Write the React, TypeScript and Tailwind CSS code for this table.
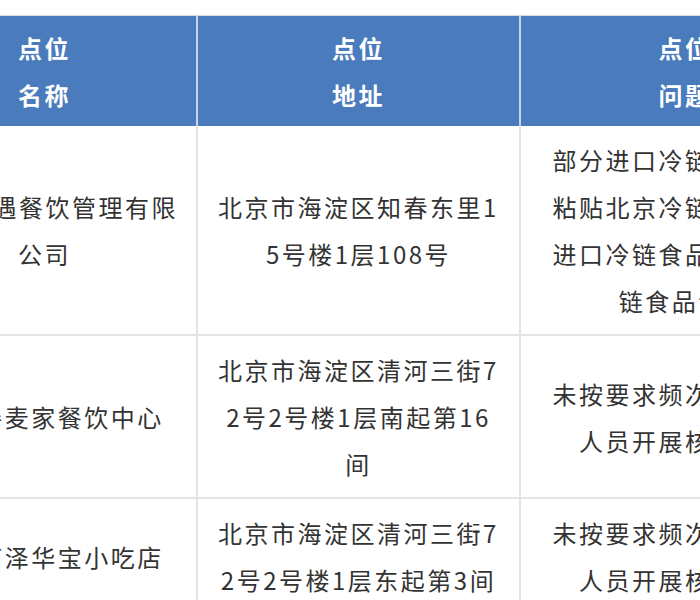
import React from "react";

type Row = {
  name: string[];
  address: string[];
  problem: string[];
};

const rows: Row[] = [
  {
    name: ["北京相遇餐饮管理有限", "公司"],
    address: ["北京市海淀区知春东里1", "5号楼1层108号"],
    problem: ["部分进口冷链食品未按", "粘贴北京冷链食品追溯", "进口冷链食品未索取冷", "链食品证明"],
  },
  {
    name: ["北京善麦家餐饮中心"],
    address: ["北京市海淀区清河三街7", "2号2号楼1层南起第16", "间"],
    problem: ["未按要求频次组织从业", "人员开展核酸检测"],
  },
  {
    name: ["北京南泽华宝小吃店"],
    address: ["北京市海淀区清河三街7", "2号2号楼1层东起第3间"],
    problem: ["未按要求频次组织从业", "人员开展核酸检测"],
  },
];

function Lines({ lines }: { lines: string[] }) {
  return (
    <>
      {lines.map((l, i) => (
        <div key={i} className="whitespace-nowrap">
          {l}
        </div>
      ))}
    </>
  );
}

export default function App() {
  return (
    <div
      className="w-[700px] h-[600px] overflow-hidden bg-white pt-[15px]"
      style={{ fontFamily: '"Noto Sans CJK SC", "Noto Sans", sans-serif' }}
    >
      <table className="ml-[-107px] w-[956px] max-w-none table-fixed border-collapse text-[24px] leading-[47px] tracking-[2.5px] text-center">
        <colgroup>
          <col className="w-[304px]" />
          <col className="w-[323px]" />
          <col className="w-[329px]" />
        </colgroup>
        <thead>
          <tr className="bg-[#4a7bbd] text-white border-t border-t-[#d9dde3]">
            <th className="py-[8px] px-[20px] border-r-2 border-r-[#c8d3e3] font-bold">
              <Lines lines={["点位", "名称"]} />
            </th>
            <th className="py-[8px] px-[20px] border-r-2 border-r-[#c8d3e3] font-bold">
              <Lines lines={["点位", "地址"]} />
            </th>
            <th className="py-[8px] px-[20px] font-bold">
              <Lines lines={["点位", "问题"]} />
            </th>
          </tr>
        </thead>
        <tbody className="text-[#333333]">
          {rows.map((r, i) => (
            <tr key={i} className="border-b-2 border-b-[#e4e4e4]">
              <td className="py-[10px] px-[20px] border-r-2 border-r-[#e4e4e4] align-middle">
                <Lines lines={r.name} />
              </td>
              <td className="py-[10px] px-[20px] border-r-2 border-r-[#e4e4e4] align-middle">
                <Lines lines={r.address} />
              </td>
              <td className="py-[10px] px-[20px] align-middle">
                <Lines lines={r.problem} />
              </td>
            </tr>
          ))}
        </tbody>
      </table>
    </div>
  );
}
